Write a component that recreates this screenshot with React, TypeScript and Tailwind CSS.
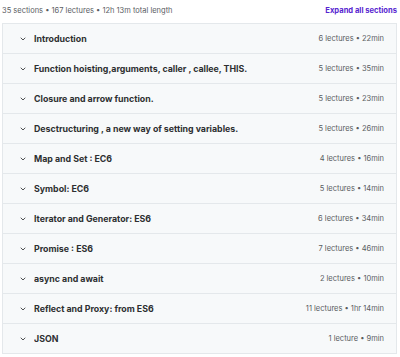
import React from "react";
import { ChevronDown } from "lucide-react";

type Section = {
  title: string;
  meta: string;
};

const sections: Section[] = [
  { title: "Introduction", meta: "6 lectures • 22min" },
  { title: "Function hoisting,arguments, caller , callee, THIS.", meta: "5 lectures • 35min" },
  { title: "Closure and arrow function.", meta: "5 lectures • 23min" },
  { title: "Desctructuring , a new way of setting variables.", meta: "5 lectures • 26min" },
  { title: "Map and Set : EC6", meta: "4 lectures • 16min" },
  { title: "Symbol: EC6", meta: "5 lectures • 14min" },
  { title: "Iterator and Generator: ES6", meta: "6 lectures • 34min" },
  { title: "Promise : ES6", meta: "7 lectures • 46min" },
  { title: "async and await", meta: "2 lectures • 10min" },
  { title: "Reflect and Proxy: from ES6", meta: "11 lectures • 1hr 14min" },
  { title: "JSON", meta: "1 lecture • 9min" },
];

export default function App() {
  return (
    <div className="w-[400px] h-[357px] overflow-hidden bg-white font-['Inter',sans-serif] text-[#2d2f31]">
      <div className="flex items-center justify-between h-[23px] pl-[2px] pr-[3px] pb-[1px]">
        <span className="text-[7.5px] text-[#595c5f]">
          35 sections • 167 lectures • 12h 13m total length
        </span>
        <button className="text-[7.6px] font-bold text-[#5624d0]">Expand all sections</button>
      </div>
      <div className="ml-[2px] mr-[3px] border-b border-[#e4e8eb]">
        {sections.map((s) => (
          <div
            key={s.title}
            className="flex items-center h-[30px] bg-[#f7f9fa] border border-b-0 border-[#e4e8eb] pl-[16px] pr-[12px]"
          >
            <ChevronDown className="w-[8px] h-[8px] text-[#2d2f31] shrink-0" strokeWidth={2.5} />
            <span className="ml-[7px] text-[8.8px] font-bold flex-1 truncate">{s.title}</span>
            <span className="text-[7.5px] text-[#595c5f] shrink-0">{s.meta}</span>
          </div>
        ))}
      </div>
    </div>
  );
}
